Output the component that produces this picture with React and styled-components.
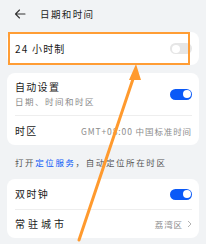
import styled, { createGlobalStyle } from "styled-components";

// ========== global ==========
const Global = createGlobalStyle`
  html, body {
    margin: 0;
    padding: 0;
    background: #f1f3f5;
  }
  body {
    font-family: "Noto Sans CJK SC", "Noto Sans", sans-serif;
    color: #1a1a1a;
  }
`;

// ========== styles ==========
const Page = styled.div`
  position: relative;
  width: 206px;
  height: 244px;
  overflow: hidden;
  background: #f1f3f5;
`;

const Header = styled.div`
  height: 28px;
  display: flex;
  align-items: center;
  padding-left: 14px;
  gap: 14px;
  font-size: 9.5px;
  letter-spacing: 1.4px;
  color: #222;
`;

const Content = styled.div`
  display: flex;
  flex-direction: column;
  padding: 4px 7px 0 7px;
`;

const Card = styled.div`
  position: relative;
  background: #fff;
  border-radius: 8px;
  padding: 0 7px 0 8px;
  margin-bottom: ${(p) => p.$mb || 0}px;
`;

const Row = styled.div`
  height: ${(p) => p.$h}px;
  display: flex;
  align-items: center;
  justify-content: space-between;
  border-bottom: ${(p) => (p.$line ? "1px solid #eeeeee" : "none")};
`;

const Texts = styled.div`
  display: flex;
  flex-direction: column;
  gap: 3px;
`;

const Title = styled.div`
  font-size: 10px;
  letter-spacing: ${(p) => p.$ls || 1}px;
  line-height: 12px;
  color: #1a1a1a;
`;

const Sub = styled.div`
  font-size: 8.5px;
  letter-spacing: 1.5px;
  line-height: 11px;
  color: #888;
`;

const Value = styled.div`
  display: flex;
  align-items: center;
  gap: 4px;
  font-size: 8.5px;
  letter-spacing: 0.9px;
  color: #8c8c8c;
`;

const Toggle = styled.div`
  width: 22px;
  height: 11px;
  border-radius: 6px;
  background: ${(p) => (p.$on ? "#0a59f7" : "#e6e6e6")};
  position: relative;
  flex-shrink: 0;

  &::after {
    content: "";
    position: absolute;
    top: 1.5px;
    ${(p) => (p.$on ? "right: 1.5px;" : "left: 1.5px;")}
    width: 8px;
    height: 8px;
    border-radius: 50%;
    background: #fff;
  }
`;

const Note = styled.div`
  height: 34px;
  display: flex;
  align-items: center;
  padding-left: 8px;
  font-size: 8.5px;
  letter-spacing: 1.6px;
  color: #555;

  span {
    color: #0a59f7;
  }
`;

const Highlight = styled.div`
  position: absolute;
  left: 1px;
  top: 0;
  width: 178px;
  height: 29px;
  border: 2px solid #ff9d35;
  pointer-events: none;
`;

const Overlay = styled.svg`
  position: absolute;
  left: 0;
  top: 0;
  pointer-events: none;
`;

// ========== component ==========
const App = () => {
  return (
    <Page>
      <Global />
      <Header>
        <svg width="12" height="10" viewBox="0 0 12 10">
          <path
            d="M11 5H1.5M5.5 1L1.5 5L5.5 9"
            fill="none"
            stroke="#333"
            strokeWidth="1.1"
            strokeLinecap="round"
            strokeLinejoin="round"
          />
        </svg>
        日期和时间
      </Header>

      <Content>
        <Card $mb={8}>
          <Row $h={33}>
            <Title $ls={1.2}>24 小时制</Title>
            <Toggle />
          </Row>
          <Highlight />
        </Card>

        <Card>
          <Row $h={42} $line>
            <Texts>
              <Title $ls={1.3}>自动设置</Title>
              <Sub>日期、时间和时区</Sub>
            </Texts>
            <Toggle $on />
          </Row>
          <Row $h={29}>
            <Title $ls={1.3}>时区</Title>
            <Value>GMT+08:00 中国标准时间</Value>
          </Row>
        </Card>

        <Note>
          打开<span>定位服务</span>，自动定位所在时区
        </Note>

        <Card>
          <Row $h={30} $line>
            <Title $ls={1.4}>双时钟</Title>
            <Toggle $on />
          </Row>
          <Row $h={28}>
            <Title $ls={3}>常驻城市</Title>
            <Value>
              荔湾区
              <svg width="5" height="8" viewBox="0 0 5 8">
                <path
                  d="M1 1L4 4L1 7"
                  fill="none"
                  stroke="#aaa"
                  strokeWidth="0.9"
                />
              </svg>
            </Value>
          </Row>
        </Card>
      </Content>

      <Overlay width="206" height="244" viewBox="0 0 206 244">
        <line
          x1="79"
          y1="240"
          x2="134"
          y2="76"
          stroke="#ff9a2e"
          strokeWidth="3"
          strokeLinecap="round"
        />
        <polygon points="136,64 129,80 141,80" fill="#ff9a2e" />
      </Overlay>
    </Page>
  );
};

export default App;
